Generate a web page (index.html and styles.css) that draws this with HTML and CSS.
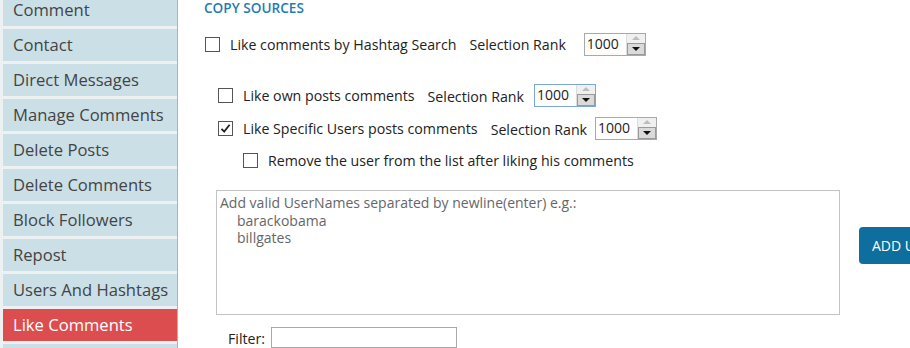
FILE: index.html
```html
<!DOCTYPE html>
<html lang="en">
<head>
    <meta charset="UTF-8">
    <title>Like Comments</title>
    <link rel="stylesheet" href="styles.css">
</head>
<body>
    <div class="app">
        <ul class="side-menu">
            <li>Comment</li>
            <li>Contact</li>
            <li>Direct Messages</li>
            <li>Manage Comments</li>
            <li>Delete Posts</li>
            <li>Delete Comments</li>
            <li>Block Followers</li>
            <li>Repost</li>
            <li>Users And Hashtags</li>
            <li class="active">Like Comments</li>
            <li>Settings</li>
        </ul>

        <div class="content">
            <h4 class="section-title">COPY SOURCES</h4>

            <div class="opt-row row-hashtag">
                <span class="check"></span>
                <span class="opt-label">Like comments by Hashtag Search</span>
                <span class="rank-label">Selection Rank</span>
                <div class="spinner"><span class="spin-value">1000</span><span class="spin-btns"><span class="spin-up"></span><span class="spin-down"></span></span></div>
            </div>

            <div class="opt-row row-own">
                <span class="check"></span>
                <span class="opt-label">Like own posts comments</span>
                <span class="rank-label">Selection Rank</span>
                <div class="spinner focused"><span class="spin-value">1000</span><span class="spin-btns"><span class="spin-up"></span><span class="spin-down"></span></span></div>
            </div>

            <div class="opt-row row-users">
                <span class="check checked">
                    <svg width="13" height="13" viewBox="0 0 13 13"><path d="M2.5 6.8 L5.2 9.6 L10.6 2.8" fill="none" stroke="#222" stroke-width="1.8"/></svg>
                </span>
                <span class="opt-label">Like Specific Users posts comments</span>
                <span class="rank-label">Selection Rank</span>
                <div class="spinner"><span class="spin-value">1000</span><span class="spin-btns"><span class="spin-up"></span><span class="spin-down"></span></span></div>
            </div>

            <div class="opt-row row-remove">
                <span class="check"></span>
                <span class="opt-label">Remove the user from the list after liking his comments</span>
            </div>

            <div class="users-area">
                <div class="users-box">
                    <div>Add valid UserNames separated by newline(enter) e.g.:</div>
                    <div class="sample">barackobama</div>
                    <div class="sample">billgates</div>
                </div>
                <button class="add-btn">ADD USERS</button>
            </div>

            <div class="filter-row">
                <label>Filter:</label>
                <input type="text" class="filter-input">
            </div>
        </div>
    </div>
</body>
</html>
```

FILE: styles.css
```css
body {
    margin: 0;
    background: #fff;
    font-family: "Open Sans", "Noto Sans", sans-serif;
    color: #222;
    overflow: hidden;
}

.app {
    display: flex;
    height: 348px;
}

/* left menu */
.side-menu {
    list-style: none;
    margin: 0;
    padding: 0 0 0 3px;
    width: 174px;
    flex: none;
    background: #eef1f2;
    border-right: 1px solid #e89a9b;
    display: flex;
    flex-direction: column;
    gap: 3px;
    overflow: hidden;
}
.side-menu li {
    flex: none;
    height: 32px;
    line-height: 32px;
    padding-left: 10px;
    background: #cbdfe6;
    color: #444;
    font-size: 16.6px;
    white-space: nowrap;
}
.side-menu li:first-child {
    margin-top: -6px;
}
.side-menu li.active {
    background: #dc4d50;
    color: #fff;
}

/* content */
.content {
    flex: 1;
    min-width: 0;
    overflow: hidden;
    padding-left: 26px;
    font-size: 14.2px;
}
.section-title {
    margin: 0;
    padding-top: 1px;
    line-height: 14px;
    font-size: 13.6px;
    font-weight: 600;
    color: #1f7cb3;
}

.opt-row {
    display: flex;
    align-items: center;
    height: 24px;
    white-space: nowrap;
}
.row-hashtag { margin-top: 17px; margin-left: 1px; }
.row-own { margin-top: 27px; margin-left: 14px; }
.row-users { margin-top: 9px; margin-left: 14px; }
.row-remove { margin-top: 8px; margin-left: 39px; }

.check {
    width: 13px;
    height: 13px;
    border: 1px solid #555;
    background: #fff;
    flex: none;
    margin-right: 10px;
    display: flex;
}
.opt-label {
    margin-right: 13px;
}
.row-own .rank-label { margin-top: 3px; margin-right: 10px; }
.row-users .rank-label { margin-top: 3px; margin-right: 8px; }
.row-hashtag .rank-label { margin-right: 18px; }

.spinner {
    display: flex;
    width: 62px;
    height: 23px;
    box-sizing: border-box;
    border: 1px solid #a9a9a9;
    background: #fff;
}
.spinner.focused {
    border-color: #7aa7d8;
}
.spin-value {
    flex: 1;
    line-height: 20px;
    padding-left: 2px;
    font-size: 14px;
}
.spin-btns {
    width: 18px;
    display: flex;
    flex-direction: column;
    border-left: 1px solid #ddd;
}
.spin-up, .spin-down {
    flex: 1;
    position: relative;
    background: #f0f0f0;
}
.spin-down {
    background: #dadada;
    border: 1px solid #9a9a9a;
}
.spin-up::after, .spin-down::after {
    content: "";
    position: absolute;
    left: 50%;
    top: 50%;
    margin-left: -4px;
    border-left: 4px solid transparent;
    border-right: 4px solid transparent;
}
.spin-up::after {
    margin-top: -2px;
    border-bottom: 4px solid #bdbdbd;
}
.spin-down::after {
    margin-top: -2px;
    border-top: 4px solid #111;
}

.users-area {
    display: flex;
    align-items: flex-start;
    margin-top: 18px;
    margin-left: 12px;
}
.users-box {
    flex: none;
    width: 619px;
    height: 120px;
    border: 1px solid #c3c3c6;
    padding: 3px 0 0 3px;
    color: #666;
    font-size: 14px;
    line-height: 17.5px;
}
.users-box .sample {
    padding-left: 17px;
}
.add-btn {
    flex: none;
    margin-left: 19px;
    margin-top: 37px;
    height: 37px;
    padding: 0 13px;
    background: #0e6e9e;
    color: #fff;
    border: none;
    border-radius: 4px;
    font-family: inherit;
    font-size: 14px;
    white-space: nowrap;
}

.filter-row {
    display: flex;
    align-items: flex-end;
    margin-top: 12px;
    margin-left: 24px;
}
.filter-row label {
    margin-right: 6px;
    line-height: 18px;
}
.filter-input {
    width: 184px;
    height: 19px;
    padding: 0;
    border: 1px solid #a9a9a9;
}
```
